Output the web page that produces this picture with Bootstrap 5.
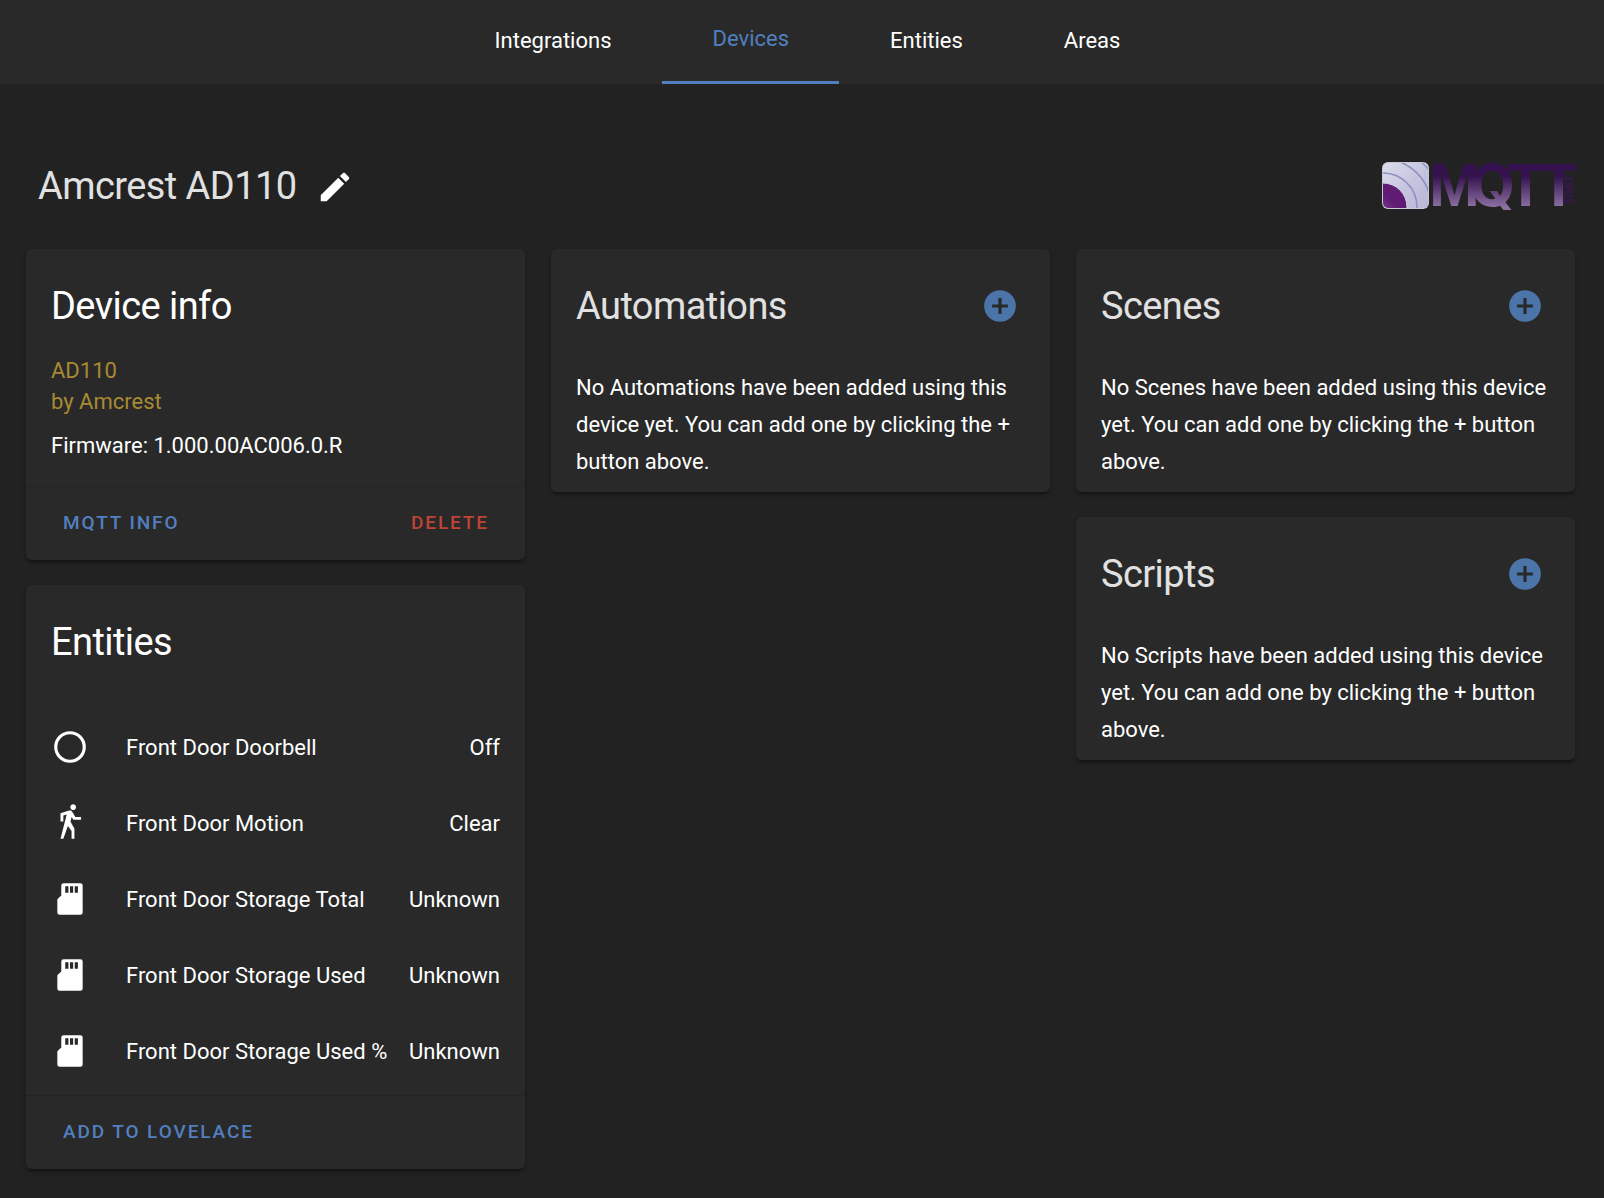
<!DOCTYPE html>
<html lang="en" data-bs-theme="dark">
<head>
<meta charset="utf-8">
<meta name="viewport" content="width=device-width, initial-scale=1">
<title>Amcrest AD110</title>
<link href="https://cdn.jsdelivr.net/npm/bootstrap@5.3.0/dist/css/bootstrap.min.css" rel="stylesheet">
<style>
  :root { --primary: #527fbf; --panel: #292929; --page: #222222; }
  body { background: var(--page); color: #fff; font-family: Roboto, "Noto Sans", sans-serif; font-size: 22px; line-height: 31px; }
  .top-tabs { background: var(--panel); height: 84px; padding-left: 10px; }
  .top-tabs .nav-link { display: flex; align-items: center; color: #fff; padding: 0 50px 4px 51px; border-bottom: 0 solid var(--primary); }
  .top-tabs .nav-link.active { color: var(--primary); border-bottom-width: 3px; }
  .page-body { padding: 64px 29px 26px 26px; }
  .page-title { padding-left: 12px; margin-bottom: 24px; }
  .headline { font-size: 38px; line-height: 76px; font-weight: 400; letter-spacing: -0.015em; margin: 0; }
  .soft { color: #e1e1e1; }
  .page-title .headline { line-height: 77px; }
  .icon { width: 38px; height: 38px; fill: currentColor; flex: none; display: block; }
  .icon-btn { background: none; border: 0; padding: 19px; color: #fff; line-height: 1; }
  .title-edit { padding: 0; margin-left: 19px; }
  .add-btn { color: #4b75a9; }
  .brand-logo { width: 194px; height: 64px; }
  .columns { --bs-gutter-x: 26px; }
  .panel { --bs-card-bg: var(--panel); --bs-card-border-width: 0; --bs-card-border-radius: 6px; --bs-card-color: #fff; margin-bottom: 25px; box-shadow: 0 3px 3px 0 rgba(0,0,0,.14), 0 2px 5px 0 rgba(0,0,0,.12), 0 5px 2px -3px rgba(0,0,0,.2); }
  .panel:last-child { margin-bottom: 0; }
  .panel-head { padding: 19px 12px 0 25px; }
  .panel-note { padding: 25px 25px 12px; margin: 0; line-height: 37px; }
  .info-text { padding: 11px 25px 25px; }
  .model { color: #a88a33; margin-bottom: 13px; }
  .panel-foot { border-top: 1px solid #232323; padding: 7px 24px 9px 25px; }
  .text-action { color: var(--primary); font-size: 19px; font-weight: 500; letter-spacing: 0.1em; line-height: 57px; padding: 0 12px; border: 0; text-transform: uppercase; }
  .text-action.danger { color: #bd4436; }
  .text-action:hover { color: #fff; }
  .entity-list { padding: 29px 25px 6px; margin: 0; }
  .entity { height: 76px; }
  .entity-name { padding-left: 37px; }
</style>
<script src="https://cdn.jsdelivr.net/npm/bootstrap@5.3.0/dist/js/bootstrap.bundle.min.js" defer></script>
</head>
<body>
<svg class="d-none" aria-hidden="true">
  <symbol id="i-plus" viewBox="0 0 24 24"><path d="M17,13H13V17H11V13H7V11H11V7H13V11H17M12,2A10,10 0 0,0 2,12A10,10 0 0,0 12,22A10,10 0 0,0 22,12A10,10 0 0,0 12,2Z"/></symbol>
  <symbol id="i-pencil" viewBox="0 0 24 24"><path d="M20.71,7.04C21.1,6.65 21.1,6 20.71,5.63L18.37,3.29C18,2.9 17.35,2.9 16.96,3.29L15.12,5.12L18.87,8.87M3,17.25V21H6.75L17.81,9.93L14.06,6.18L3,17.25Z"/></symbol>
  <symbol id="i-circle" viewBox="0 0 24 24"><path d="M12,20A8,8 0 0,1 4,12A8,8 0 0,1 12,4A8,8 0 0,1 20,12A8,8 0 0,1 12,20M12,2A10,10 0 0,0 2,12A10,10 0 0,0 12,22A10,10 0 0,0 22,12A10,10 0 0,0 12,2Z"/></symbol>
  <symbol id="i-walk" viewBox="0 0 24 24"><path d="M14.12,10H19V8.2H15.38L13.38,4.87C13.08,4.37 12.54,4.03 11.92,4.03C11.74,4.03 11.58,4.06 11.42,4.11L6,5.8V11H7.8V7.33L9.91,6.67L6,22H7.8L10.67,13.89L13,17V22H14.8V15.59L12.31,11.05L13.04,8.18M14,3.8C15,3.8 15.8,3 15.8,2C15.8,1 15,0.2 14,0.2C13,0.2 12.2,1 12.2,2C12.2,3 13,3.8 14,3.8Z"/></symbol>
  <symbol id="i-sd" viewBox="0 0 24 24"><path d="M8,2A1.5,1.5 0 0,0 6.5,3.500V9.800L4.600,11.500A1.500,1.500 0 0,0 4,12.700V20.5A1.5,1.5 0 0,0 5.5,22H18.5A1.5,1.5 0 0,0 20,20.5V3.5A1.5,1.5 0 0,0 18.5,2M9,4H11V8H9V4M12,4H14V8H12V4M15,4H17V8H15V4Z" fill-rule="evenodd"/></symbol>
</svg>

<header>
  <nav class="nav top-tabs justify-content-center align-items-stretch" aria-label="Configuration">
    <a class="nav-link" href="#">Integrations</a>
    <a class="nav-link active" aria-current="page" href="#">Devices</a>
    <a class="nav-link" href="#">Entities</a>
    <a class="nav-link" href="#">Areas</a>
  </nav>
</header>

<main class="container-fluid page-body">
  <div class="page-title d-flex align-items-center justify-content-between">
    <div class="d-flex align-items-center">
      <h1 class="headline soft">Amcrest AD110</h1>
      <button class="icon-btn title-edit" type="button" aria-label="Edit name"><svg class="icon"><use href="#i-pencil"/></svg></button>
    </div>
    <svg class="brand-logo" viewBox="0 -6 194 64" role="img" aria-label="MQTT.org">
      <defs>
        <linearGradient id="word" gradientUnits="userSpaceOnUse" x1="0" y1="2" x2="0" y2="46">
          <stop offset="0.3" stop-color="#35124f"/><stop offset="1" stop-color="#8c70a2"/>
        </linearGradient>
        <linearGradient id="tile" x1="0" y1="0" x2="1" y2="1">
          <stop offset="0" stop-color="#dcdcec"/><stop offset="0.5" stop-color="#c6c6e0"/><stop offset="1" stop-color="#b8b7d6"/>
        </linearGradient>
        <linearGradient id="core" x1="0" y1="1" x2="1" y2="0">
          <stop offset="0.2" stop-color="#9a68ab"/><stop offset="0.65" stop-color="#611b74"/>
        </linearGradient>
        <clipPath id="tile-clip"><rect x="2" y="2" width="45" height="45" rx="5"/></clipPath>
      </defs>
      <rect x="1" y="1" width="47" height="47" rx="6" fill="#c9c8d4"/>
      <g clip-path="url(#tile-clip)">
        <rect x="2" y="2" width="45" height="45" fill="url(#tile)"/>
        <circle cx="2" cy="46" r="34" fill="none" stroke="#8e8dbc" stroke-width="1.5"/>
        <circle cx="2" cy="46" r="48" fill="none" stroke="#8b8aba" stroke-width="1.5"/>
        <circle cx="2" cy="46" r="59" fill="none" stroke="#9594bf" stroke-width="1.5"/>
        <circle cx="2" cy="46" r="24" fill="url(#core)" stroke="#d6d4e6" stroke-width="1"/>
      </g>
      <g font-family="Liberation Sans, Arial, sans-serif" font-weight="700" fill="url(#word)">
        <text y="45" x="48" font-size="61">M</text>
        <text y="45" x="89" font-size="58" font-family="Inter, sans-serif">Q</text>
        <text y="45" x="126 159" font-size="61">TT</text>
      </g>
      <text transform="translate(183 12) rotate(90)" font-family="Liberation Sans, Arial, sans-serif" font-size="12" font-weight="700" fill="#3a1655">.ORG</text>
    </svg>
  </div>

  <div class="row columns">
    <div class="col-12 col-lg-4">
      <section class="card panel">
        <div class="panel-head"><h2 class="headline">Device info</h2></div>
        <div class="info-text">
          <div class="model">AD110<br>by Amcrest</div>
          <div>Firmware: 1.000.00AC006.0.R</div>
        </div>
        <div class="panel-foot d-flex justify-content-between">
          <button class="btn text-action" type="button">MQTT Info</button>
          <button class="btn text-action danger" type="button">Delete</button>
        </div>
      </section>

      <section class="card panel">
        <div class="panel-head"><h2 class="headline">Entities</h2></div>
        <ul class="list-unstyled entity-list">
          <li class="entity d-flex align-items-center"><svg class="icon"><use href="#i-circle"/></svg><span class="entity-name flex-grow-1">Front Door Doorbell</span><span>Off</span></li>
          <li class="entity d-flex align-items-center"><svg class="icon"><use href="#i-walk"/></svg><span class="entity-name flex-grow-1">Front Door Motion</span><span>Clear</span></li>
          <li class="entity d-flex align-items-center"><svg class="icon"><use href="#i-sd"/></svg><span class="entity-name flex-grow-1">Front Door Storage Total</span><span>Unknown</span></li>
          <li class="entity d-flex align-items-center"><svg class="icon"><use href="#i-sd"/></svg><span class="entity-name flex-grow-1">Front Door Storage Used</span><span>Unknown</span></li>
          <li class="entity d-flex align-items-center"><svg class="icon"><use href="#i-sd"/></svg><span class="entity-name flex-grow-1">Front Door Storage Used %</span><span>Unknown</span></li>
        </ul>
        <div class="panel-foot d-flex">
          <button class="btn text-action" type="button">Add to Lovelace</button>
        </div>
      </section>
    </div>

    <div class="col-12 col-lg-4">
      <section class="card panel">
        <div class="panel-head d-flex justify-content-between">
          <h2 class="headline soft">Automations</h2>
          <button class="icon-btn add-btn" type="button" aria-label="Add automation"><svg class="icon"><use href="#i-plus"/></svg></button>
        </div>
        <p class="panel-note">No Automations have been added using this device yet. You can add one by clicking the + button above.</p>
      </section>
    </div>

    <div class="col-12 col-lg-4">
      <section class="card panel">
        <div class="panel-head d-flex justify-content-between">
          <h2 class="headline soft">Scenes</h2>
          <button class="icon-btn add-btn" type="button" aria-label="Add scene"><svg class="icon"><use href="#i-plus"/></svg></button>
        </div>
        <p class="panel-note">No Scenes have been added using this device yet. You can add one by clicking the + button above.</p>
      </section>
      <section class="card panel">
        <div class="panel-head d-flex justify-content-between">
          <h2 class="headline soft">Scripts</h2>
          <button class="icon-btn add-btn" type="button" aria-label="Add script"><svg class="icon"><use href="#i-plus"/></svg></button>
        </div>
        <p class="panel-note">No Scripts have been added using this device yet. You can add one by clicking the + button above.</p>
      </section>
    </div>
  </div>
</main>
</body>
</html>
